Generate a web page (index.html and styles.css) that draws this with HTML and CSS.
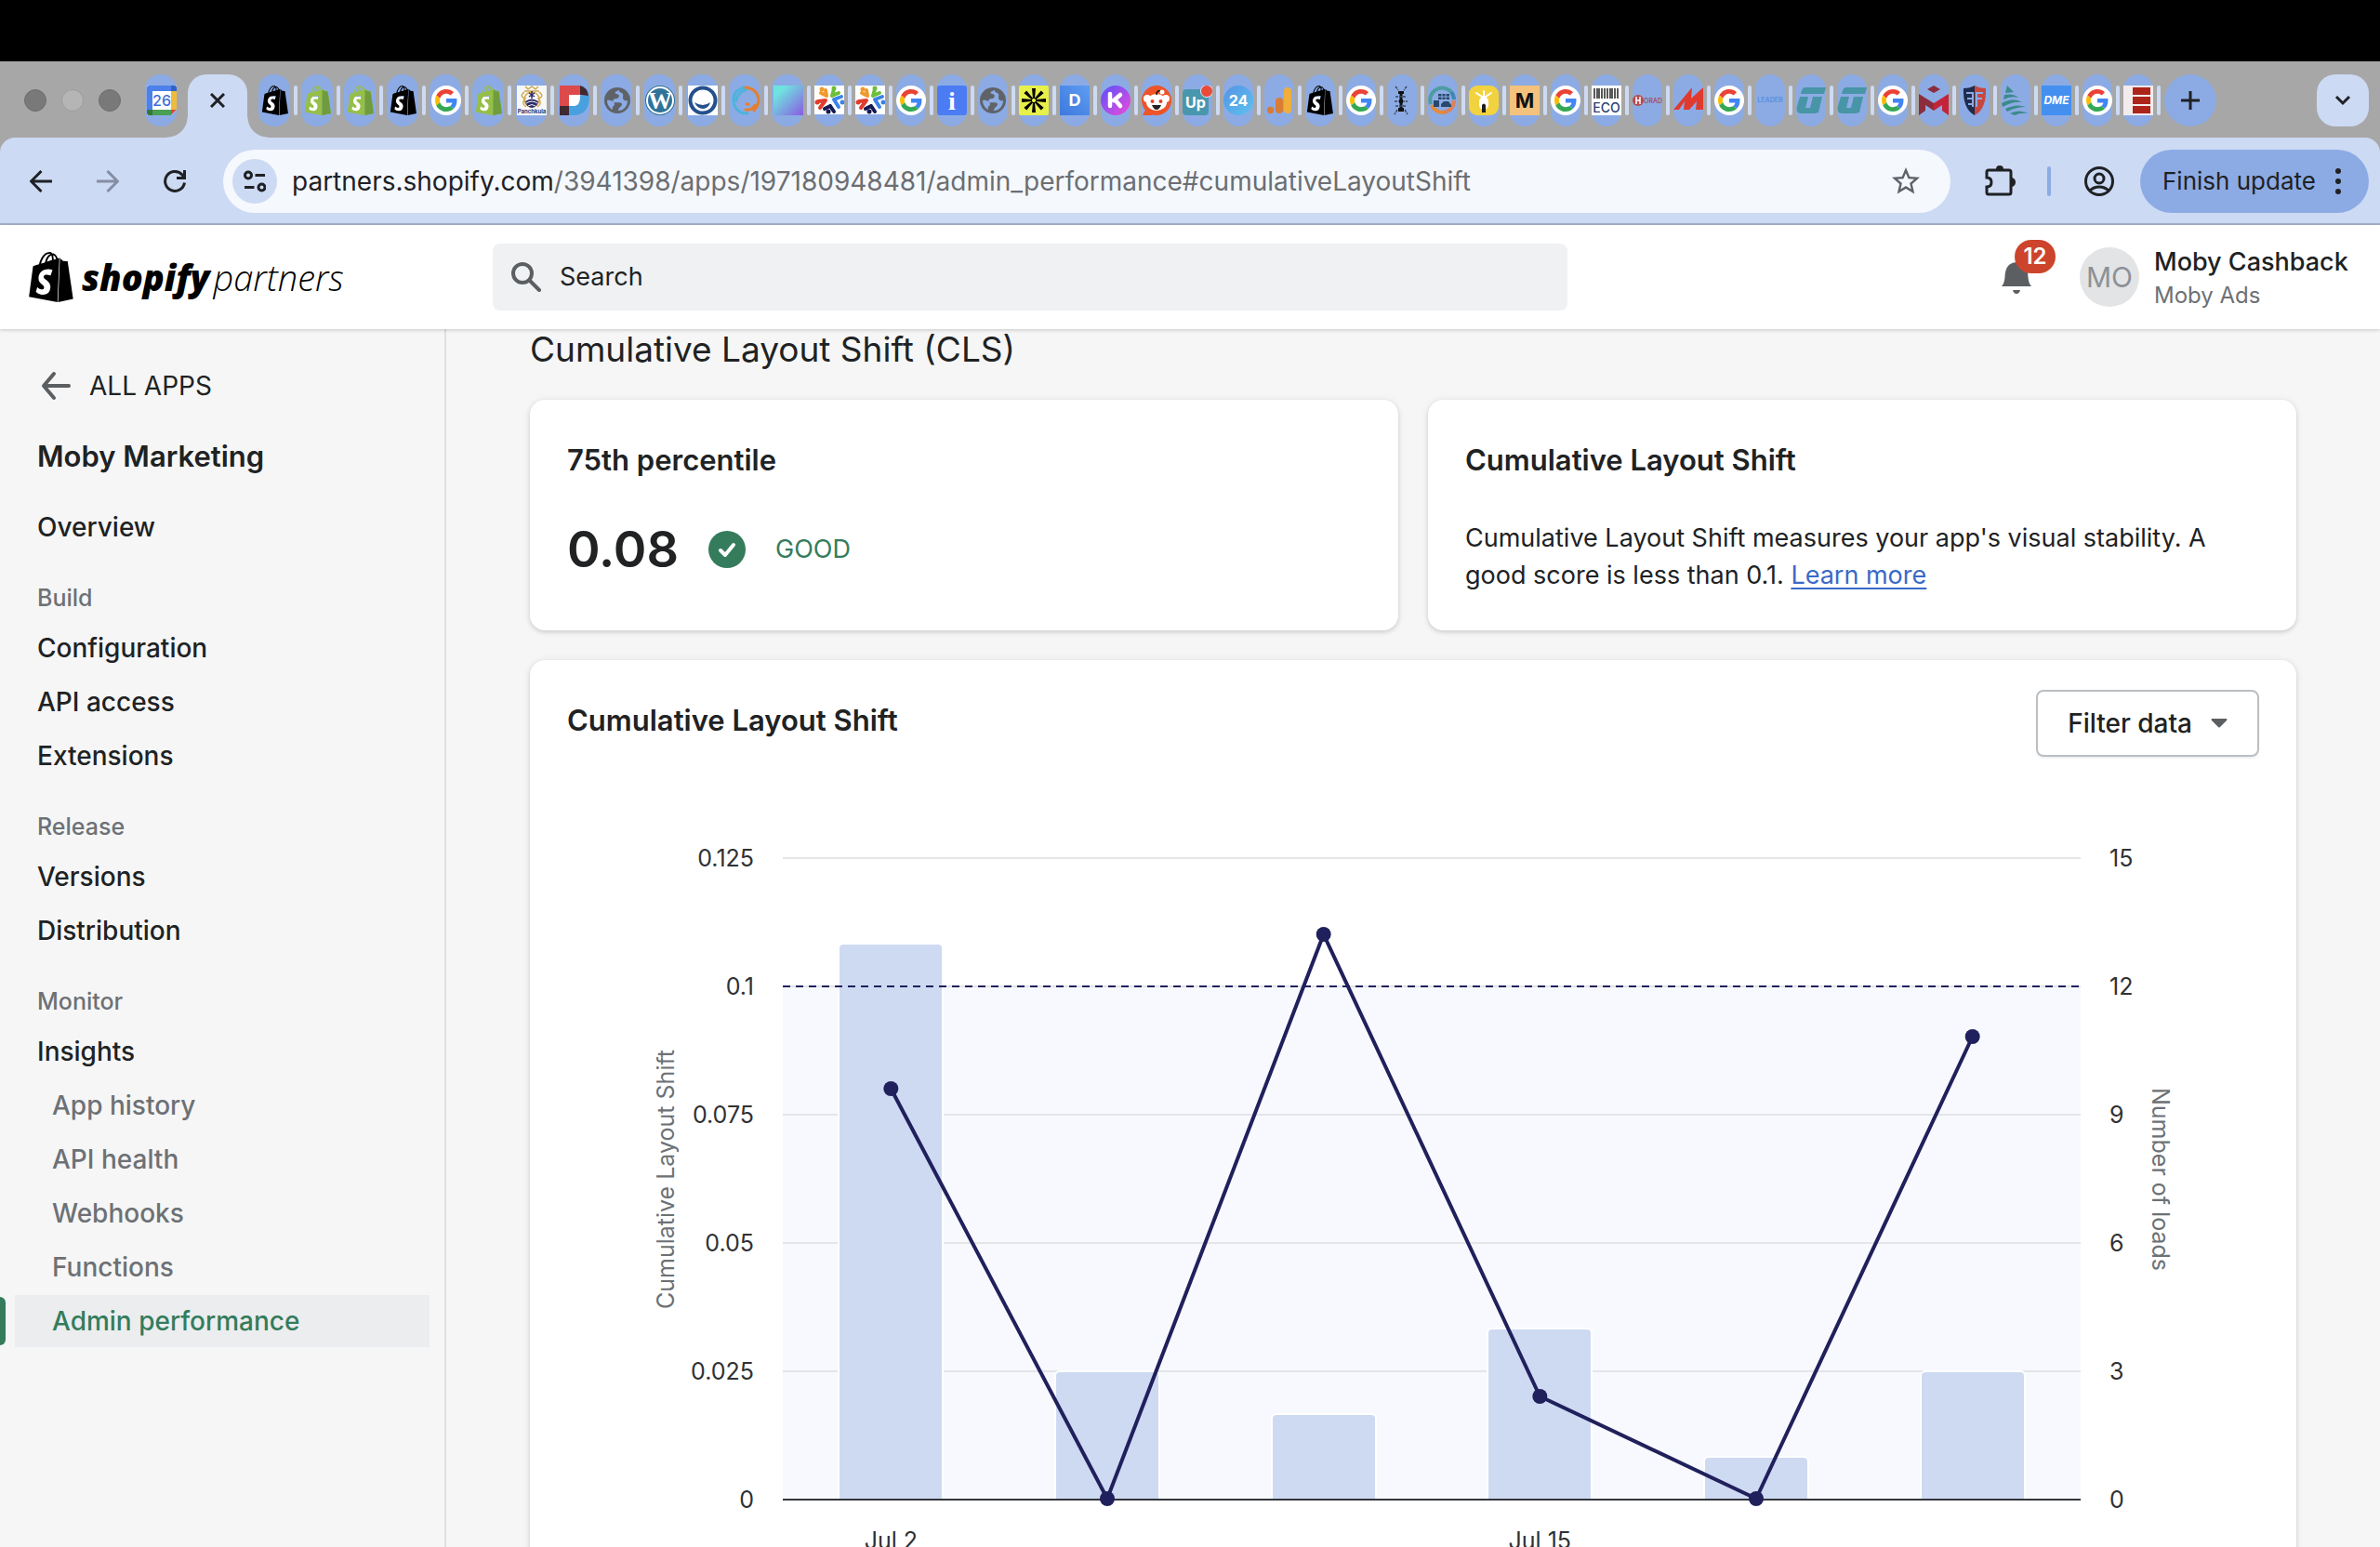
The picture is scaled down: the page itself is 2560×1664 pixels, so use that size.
FILE: index.html
```html
<!DOCTYPE html>
<html lang="en">
<head>
<meta charset="utf-8">
<title>Moby Marketing - Admin performance</title>
<link rel="stylesheet" href="styles.css">
</head>
<body>
<svg class="sprite" aria-hidden="true">
  <defs>
    <linearGradient id="grad-aqua" x1="0" y1="0" x2="1" y2="1"><stop offset="0.2" stop-color="#6fe3e0"/><stop offset="1" stop-color="#8a5be0"/></linearGradient>
    <linearGradient id="grad-blue" x1="1" y1="0" x2="0" y2="1"><stop offset="0" stop-color="#5f9cf2"/><stop offset="1" stop-color="#3c79dc"/></linearGradient>
    <linearGradient id="grad-pink" x1="0" y1="0" x2="1" y2="1"><stop offset="0.2" stop-color="#7550f5"/><stop offset="1" stop-color="#f04bd8"/></linearGradient>
    <linearGradient id="grad-sky" x1="0" y1="0" x2="1" y2="1"><stop offset="0" stop-color="#5592e6"/><stop offset="1" stop-color="#5cc3ee"/></linearGradient>
  </defs>
  <symbol id="bag" viewBox="0 0 24 24">
    <path d="M15.337 23.979l7.216-1.561s-2.604-17.613-2.625-17.73c-.018-.116-.114-.192-.211-.192s-1.929-.136-1.929-.136-1.275-1.274-1.439-1.411c-.045-.037-.075-.057-.121-.074l-.914 21.104h.023zM11.71 11.305s-.81-.424-1.774-.424c-1.447 0-1.504.906-1.504 1.141 0 1.232 3.24 1.715 3.24 4.629 0 2.295-1.44 3.76-3.406 3.76-2.354 0-3.54-1.465-3.54-1.465l.646-2.086s1.245 1.066 2.28 1.066c.675 0 .975-.545.975-.932 0-1.619-2.654-1.694-2.654-4.359-.034-2.237 1.571-4.416 4.827-4.416 1.257 0 1.875.361 1.875.361l-.945 2.715-.02.01zM11.17.83c.136 0 .271.038.405.135-.984.465-2.064 1.639-2.508 3.992-.656.213-1.293.405-1.889.578C7.697 3.75 8.951.84 11.17.84V.83zm1.235 2.949v.135c-.754.232-1.583.484-2.394.736.466-1.777 1.333-2.645 2.085-2.971.193.501.309 1.176.309 2.1zm.539-2.234c.694.074 1.141.867 1.429 1.755-.349.114-.735.231-1.158.366v-.252c0-.752-.096-1.371-.271-1.871v.002zm2.992 1.289c-.02 0-.06.021-.078.021s-.289.075-.714.21c-.423-1.233-1.176-2.37-2.508-2.37h-.115C12.135.209 11.669 0 11.265 0 8.159 0 6.675 3.877 6.21 5.846c-1.194.365-2.063.636-2.16.674-.675.213-.694.232-.772.87-.075.462-1.83 14.063-1.83 14.063L15.009 24l.927-21.166z"/>
  </symbol>
  <symbol id="shop-black" viewBox="0 0 32 32">
    <path d="M6 12h10v17H4z" fill="#fff"/><path d="M20.5 8v24" stroke="#fff"/>
    <use href="#bag" width="32" height="32" fill="#000"/>
  </symbol>
  <symbol id="shop-green" viewBox="0 0 32 32">
    <path d="M6 12h10v17H4z" fill="#fff"/>
    <use href="#bag" width="32" height="32" fill="#95bf47"/>
    <path d="M20.6 4.5l3 1.4 3 .5 3.4 23.6-9.600 2z" fill="#6f9c3c"/>
  </symbol>
  <symbol id="google" viewBox="0 0 32 32">
    <circle cx="16" cy="16" r="16" fill="#fff"/>
    <g transform="translate(4 4) scale(.5)">
      <path fill="#ea4335" d="M24 9.500c3.540 0 6.710 1.220 9.210 3.600l6.850-6.850C35.900 2.380 30.470 0 24 0 14.620 0 6.510 5.380 2.560 13.220l7.980 6.190C12.430 13.720 17.740 9.500 24 9.500z"/>
      <path fill="#4285f4" d="M46.980 24.550c0-1.570-.15-3.090-.38-4.550H24v9.020h12.940c-.58 2.960-2.260 5.480-4.780 7.180l7.730 6c4.510-4.180 7.090-10.360 7.090-17.650z"/>
      <path fill="#fbbc05" d="M10.530 28.590c-.48-1.450-.76-2.990-.76-4.590s.27-3.140.76-4.590l-7.980-6.190C.92 16.460 0 20.120 0 24c0 3.880.92 7.540 2.560 10.780l7.970-6.190z"/>
      <path fill="#34a853" d="M24 48c6.480 0 11.930-2.130 15.890-5.810l-7.730-6c-2.150 1.450-4.920 2.300-8.160 2.300-6.260 0-11.570-4.220-13.470-9.910l-7.980 6.190C6.510 42.620 14.620 48 24 48z"/>
    </g>
  </symbol>
  <symbol id="globe" viewBox="0 0 32 32">
    <circle cx="16" cy="16" r="14" fill="#5f6368"/>
    <path d="M18 5c-4 1-6 3-3 4 3 0 4 3 1 5-4 0-6 2-4 4 3 1 8-1 9 2 0 3-4 3-4 7 6 0 10-5 10-11-2 1-4 0-5-2 0-3 1-4-1-6-2-1-3-1-3-3zM5 16c4-1 8 2 8 4s-3 2-2 6c-4-2-6-6-6-10z" fill="#8cabe4"/>
  </symbol>
  <symbol id="people" viewBox="0 0 32 32">
    <path d="M0 0h32v31H0z" fill="#fff"/>
    <g stroke-width="4" stroke-linecap="round"><path d="M7 8l6 3M13 11l-1-6" stroke="#ef9a2c"/><path d="M19 11l2-7M19 11l7-3" stroke="#6cbf3a"/><path d="M21 15l8-3M21 15l5 8" stroke="#3b83e8"/><path d="M12 16l-8 1M12 16l-6 8" stroke="#e03c2e"/><path d="M17 22l-6 3M17 22l4 6" stroke="#151a52"/></g>
    <g><circle cx="8" cy="4" r="2.500" fill="#ef9a2c"/><circle cx="21" cy="3" r="2.500" fill="#6cbf3a"/><circle cx="30" cy="18" r="2.500" fill="#3b83e8"/><circle cx="3" cy="18" r="2.500" fill="#e03c2e"/><circle cx="15" cy="28" r="2.500" fill="#151a52"/></g>
  </symbol>
  <symbol id="tealq" viewBox="0 0 32 32"><path d="M9 2h23l-2 7H5q1-6 4-7z" fill="#4795a7"/><path d="M4 12h9l-3 12h5l3-12h10l-4 17-4 1H6q-7 0-5-8z" fill="#4795a7"/></symbol>
</svg>

<div class="window">
  <div class="menubar"></div>
  <nav class="tabstrip" aria-label="Tabs">
    <div class="lights"><span class="light"></span><span class="light light-pale"></span><span class="light"></span></div>
    <a class="tab wide pinned" href="#"><svg viewBox="0 0 32 32">
      <path d="M0 0h32v32H0z" fill="#fff"/><path d="M0 2q0-2 2-2h24v6H6v20H0z" fill="#4c80ea"/>
      <path d="M26 0h4q2 0 2 2v4h-6z" fill="#2f63c8"/><path d="M26 6h6v20h-6z" fill="#efbb3d"/>
      <path d="M6 26h20v6H6z" fill="#4a9f55"/><path d="M0 26h6v6H2q-2 0-2-2z" fill="#35783f"/>
      <path d="M26 26h6l-6 6z" fill="#e0483c"/><path d="M32 26v6h-6z" fill="#8cabe4"/>
      <text x="16" y="22" class="t16">26</text></svg></a>
    <div class="tab-active"><button class="tab-close" aria-label="Close tab"><svg viewBox="0 0 16 16"><path d="M1 1l14 14M15 1L1 15"/></svg></button></div>
    <ul class="tabs">
      <li><a class="tab wide" href="#"><svg><use href="#shop-black"/></svg></a></li>
      <li><a class="tab wide" href="#"><svg><use href="#shop-green"/></svg></a></li>
      <li><a class="tab wide" href="#"><svg><use href="#shop-green"/></svg></a></li>
      <li><a class="tab wide" href="#"><svg><use href="#shop-black"/></svg></a></li>
      <li><a class="tab wide" href="#"><svg><use href="#google"/></svg></a></li>
      <li><a class="tab wide" href="#"><svg><use href="#shop-green"/></svg></a></li>
      <li><a class="tab wide" href="#"><svg viewBox="0 0 32 32">
        <path d="M0 0h32v32H0z" fill="#f7f7f8"/>
        <g fill="none" stroke="#d0a94e" stroke-width="1.500"><path d="M9 1l3 3 4-3 4 3 3-3M8 6h16M8 7q-6 5 1 7-5 5 1 9M24 7q6 5-1 7 5 5-1 9"/><circle cx="16" cy="15" r="8"/></g>
        <path d="M9 17q7-5 14 0-1 6-7 7-6-1-7-7z" fill="#2b2a6b"/><path d="M10 19q6-4 12 0M12 22q4-3 8 0" stroke="#f7f7f8"/><path d="M16 6v8M13 8l6 4M19 8l-6 4" stroke="#2b2a6b" stroke-width="1.500"/>
        <text x="16" y="30" class="t6 heavy navy">Panchkula</text></svg></a></li>
      <li><a class="tab wide" href="#"><svg viewBox="0 0 32 32">
        <path d="M0 0h22v10H10v12H0z" fill="#dc4a4b"/><path d="M22 0q8 2 9 11l-9-1zM0 22h10v10H0z" fill="#3f2a30"/>
        <path d="M10 10h12v4q-1 7-5 8h-7z" fill="#fff"/><path d="M22 11h10q0 20-16 21h-6V22h6q6-1 6-8z" fill="#48a0df"/></svg></a></li>
      <li><a class="tab wide" href="#"><svg><use href="#globe"/></svg></a></li>
      <li><a class="tab wide" href="#"><svg viewBox="0 0 32 32">
        <circle cx="16" cy="16" r="16" fill="#2f7399"/><circle cx="16" cy="16" r="14" fill="none" stroke="#fff" stroke-width="2"/>
        <text x="16" y="25" class="t26 serif heavy white">W</text></svg></a></li>
      <li><a class="tab wide" href="#"><svg viewBox="0 0 32 32">
        <path d="M0 0h32v32H0z" fill="#fff"/><circle cx="16" cy="16" r="13.500" fill="none" stroke="#24508c" stroke-width="4"/>
        <path d="M7 18q9 6 17 0-2 7-8 7t-9-7z" fill="#24508c"/></svg></a></li>
      <li><a class="tab wide" href="#"><svg viewBox="0 0 32 32">
        <g fill="none" stroke-linecap="round" stroke-width="3"><path d="M14 2Q2 6 3 17q2 13 15 13M17 4Q7 8 6 16" stroke="#4fb3dc"/><path d="M16 2q14 2 14 15-1 6-5 10M17 20h2M16 26q7 1 10-5" stroke="#e57f2f"/></g></svg></a></li>
      <li><a class="tab wide" href="#"><svg viewBox="0 0 32 32"><path d="M0 0h32v32H0z" fill="url(#grad-aqua)"/></svg></a></li>
      <li><a class="tab" href="#"><svg><use href="#people"/></svg></a></li>
      <li><a class="tab" href="#"><svg><use href="#people"/></svg></a></li>
      <li><a class="tab" href="#"><svg><use href="#google"/></svg></a></li>
      <li><a class="tab" href="#"><svg viewBox="0 0 32 32"><rect width="32" height="32" rx="3" fill="#4b7cf3"/><text x="16" y="26" class="t28 serif heavy white">i</text></svg></a></li>
      <li><a class="tab" href="#"><svg><use href="#globe"/></svg></a></li>
      <li><a class="tab" href="#"><svg viewBox="0 0 32 32">
        <rect width="32" height="32" rx="2" fill="#e8f04a"/>
        <g fill="#000"><path d="M14 3h4l-1 11h-2zM14 29h4l-1-11h-2zM3 14v4l11-1v-2zM29 14v4l-11-1v-2z"/><path d="M14 3h4l-1 11h-2zM14 29h4l-1-11h-2zM3 14v4l11-1v-2zM29 14v4l-11-1v-2z" transform="rotate(45 16 16)"/></g></svg></a></li>
      <li><a class="tab" href="#"><svg viewBox="0 0 32 32"><path d="M0 0h32v32H0z" fill="url(#grad-blue)"/><text x="16" y="22" class="t18 heavy white">D</text></svg></a></li>
      <li><a class="tab" href="#"><svg viewBox="0 0 32 32"><circle cx="16" cy="16" r="16" fill="url(#grad-pink)"/><path d="M10 9v13M21 10l-7 6M16 16l5 6" stroke="#fff" stroke-width="4.500" stroke-linecap="round"/></svg></a></li>
      <li><a class="tab" href="#"><svg viewBox="0 0 32 32">
        <circle cx="16" cy="16" r="16" fill="#ee5427"/><path d="M1 32l4-8 7 8z" fill="#ee5427"/>
        <circle cx="6" cy="14" r="4" fill="#fff"/><circle cx="26" cy="14" r="4" fill="#fff"/><ellipse cx="16" cy="18" rx="11" ry="9" fill="#fff"/>
        <path d="M16 10q0-5 4-4" fill="none" stroke="#111" stroke-width="1.500"/><circle cx="22" cy="7" r="2.500" fill="#fff"/>
        <circle cx="11.500" cy="17" r="2" fill="#e0402c"/><circle cx="20.500" cy="17" r="2" fill="#e0402c"/><path d="M11 21h10q-2 5-5 5t-5-5z" fill="#222"/></svg></a></li>
      <li><a class="tab" href="#"><svg viewBox="0 0 32 32"><rect y="4" width="28" height="28" rx="4" fill="#4897ae"/><text x="14" y="24" class="t16 heavy white">Up</text><circle cx="26" cy="6" r="6.500" fill="#e94a3a" stroke="#dfe8f8"/></svg></a></li>
      <li><a class="tab" href="#"><svg viewBox="0 0 32 32"><circle cx="16" cy="16" r="16" fill="url(#grad-sky)"/><text x="16" y="22" class="t16 heavy white">24</text></svg></a></li>
      <li><a class="tab" href="#"><svg viewBox="0 0 32 32"><rect x="21" y="2" width="8" height="28" rx="4" fill="#efae3d"/><rect x="12" y="13" width="8" height="17" rx="4" fill="#d97c35"/><circle cx="6.500" cy="26.500" r="3.700" fill="#d97c35"/></svg></a></li>
      <li><a class="tab" href="#"><svg><use href="#shop-black"/></svg></a></li>
      <li><a class="tab" href="#"><svg><use href="#google"/></svg></a></li>
      <li><a class="tab" href="#"><svg viewBox="0 0 32 32"><path d="M15 6v22" stroke="#111" stroke-width="3"/><path d="M9 1l3 4M21 1l-3 4M9 12h12M8 17h14M9 22h12M11 26l-3 5M19 26l3 5" stroke="#3a465c" stroke-width="1.500" stroke-dasharray="3 1"/><path d="M12 6h6v3h-6zM12 24h6v4h-6zM13 15h4v4h-4z" fill="#111"/></svg></a></li>
      <li><a class="tab" href="#"><svg viewBox="0 0 32 32">
        <g fill="none" stroke-width="4"><path d="M3 20A13 13 0 0 1 25 7" stroke="#4c9da3"/><path d="M25 7a13 13 0 0 1 3 8" stroke="#3d86b5"/><path d="M28 16a13 13 0 0 1-12 13" stroke="#dc8256"/><path d="M16 29A13 13 0 0 1 4 21" stroke="#e58b3c"/></g>
        <path d="M11 9h12v6H11zM6 16h6v7H6zM14 20l3-3h5l3 4v2H14z" fill="#29486c"/><path d="M11 12h12M15 9v6M19 9v6" stroke="#8cabe4"/></svg></a></li>
      <li><a class="tab" href="#"><svg viewBox="0 0 32 32"><rect width="32" height="32" rx="9" fill="#f2d33f"/><path d="M8 8l6 4h4l6-4M16 6v6" stroke="#fff" stroke-width="2" stroke-linecap="round"/><rect x="11" y="12" width="10" height="14" rx="5" fill="#fff"/><path d="M14 21q2-3 4 0v8h-4z" fill="#1d1d1d"/></svg></a></li>
      <li><a class="tab" href="#"><svg viewBox="0 0 32 32"><path d="M0 0h32v32H0z" fill="#f3c27c"/><text x="16" y="24" class="t22 heavy">M</text></svg></a></li>
      <li><a class="tab" href="#"><svg><use href="#google"/></svg></a></li>
      <li><a class="tab" href="#"><svg viewBox="0 0 32 32"><path d="M0 0h32v32H0z" fill="#fff"/><path d="M3 3v11M6 3v11M8 3v11M11 3v11M14 3v11M17 3v11M20 3v11M22 3v11M25 3v11M28 3v11" stroke="#222" stroke-width="1.500"/><text x="16" y="29" class="t14 navy">ECO</text></svg></a></li>
      <li><a class="tab" href="#"><svg viewBox="0 0 32 32"><circle cx="6" cy="16" r="6" fill="#b54a50"/><path d="M4 12v8M8 12v8M4 16h4" stroke="#fff" stroke-width="1.500"/><text x="22" y="19" class="t7 wine">ORAD</text></svg></a></li>
      <li><a class="tab" href="#"><svg viewBox="0 0 32 32"><path d="M0 26L20 2l-1 12L32 2v24h-8l1-9-8 9h-6l1-9-6 9z" fill="#e03a2f"/></svg></a></li>
      <li><a class="tab" href="#"><svg><use href="#google"/></svg></a></li>
      <li><a class="tab" href="#"><svg viewBox="0 0 32 32"><text x="16" y="18" class="t7 heavy sky">LEADER</text></svg></a></li>
      <li><a class="tab" href="#"><svg><use href="#tealq"/></svg></a></li>
      <li><a class="tab" href="#"><svg><use href="#tealq"/></svg></a></li>
      <li><a class="tab" href="#"><svg><use href="#google"/></svg></a></li>
      <li><a class="tab" href="#"><svg viewBox="0 0 32 32"><path d="M16 0l7 4-7 4-7-4z" fill="#8b2d3c"/><path d="M0 9l16 10v8l-9-6v6l-7 5z" fill="#8b2d3c"/><path d="M32 9L16 19v8l9-6v6l7 5z" fill="#c42439"/></svg></a></li>
      <li><a class="tab" href="#"><svg viewBox="0 0 32 32"><path d="M4 3q7 0 12-3v32Q3 25 4 3z" fill="#1e2d4d"/><path d="M28 3q-7 0-12-3v32q13-7 12-29z" fill="#c8473e"/><path d="M7 8h7v15M8 14h6M9 20h5M25 8h-7v15M24 14h-6" fill="none" stroke="#8cabe4" stroke-width="2"/></svg></a></li>
      <li><a class="tab" href="#"><svg viewBox="0 0 32 32"><path d="M7 0l7 7-9 1zM4 10q10-2 15 3-8-2-16 2zM1 19q13-7 22-1-10-1-21 5zM5 25q12-6 22-2-10 0-20 5zM10 30q9-5 20 0-9-1-15 2z" fill="#3c8a8b"/></svg></a></li>
      <li><a class="tab" href="#"><svg viewBox="0 0 32 32"><path d="M0 0h32v32H0z" fill="#4390f0"/><text x="16" y="20" class="t12 heavy ital white">DME</text></svg></a></li>
      <li><a class="tab" href="#"><svg><use href="#google"/></svg></a></li>
      <li><a class="tab" href="#"><svg viewBox="0 0 32 32"><path d="M0 0h32v32H0z" fill="#f3ecec"/><path d="M10 2h19v8H10zM10 12h19v8H10zM10 22h19v8H10z" fill="#ad2419"/></svg></a></li>
    </ul>
    <button class="tab-new" aria-label="New tab"><svg viewBox="0 0 20 20"><path d="M10 0v20M0 10h20"/></svg></button>
    <button class="tab-search" aria-label="Search tabs"><svg viewBox="0 0 18 18"><path d="M2 5l7 7 7-7"/></svg></button>
  </nav>

  <div class="toolbar-wrap">
  <div class="toolbar">
    <button class="tool" aria-label="Back"><svg viewBox="0 0 24 24"><path d="M24 12H2M12.500 1L1.500 12l11 11"/></svg></button>
    <button class="tool tool-off" aria-label="Forward"><svg viewBox="0 0 24 24"><path d="M0 12h22M11.500 1l11 11-11 11"/></svg></button>
    <button class="tool" aria-label="Reload"><svg viewBox="0 0 24 24"><path d="M22.500 13.500A10.500 10.500 0 1 1 20 5l2 2.500M22.500 0v8.500H14"/></svg></button>
    <div class="omnibox">
      <button class="site-info" aria-label="Site information"><svg viewBox="0 0 24 24"><circle cx="5" cy="5.500" r="3.500"/><path d="M12.500 5.500H23M1 18.500h10.500"/><circle cx="19.500" cy="18.500" r="3.500"/></svg></button>
      <div class="url" role="textbox" contenteditable="true" spellcheck="false" aria-label="Address">partners.shopify.com<span class="url-path">/3941398/apps/197180948481/admin_performance#cumulativeLayoutShift</span></div>
      <button class="star" aria-label="Bookmark"><svg viewBox="0 0 24 24"><path d="M22 9.240l-7.190-.62L12 2 9.190 8.630 2 9.240l5.460 4.730L5.820 21 12 17.270 18.180 21l-1.630-7.030L22 9.240zM12 15.400l-3.760 2.270 1-4.280-3.320-2.880 4.380-.38L12 6.100l1.710 4.040 4.380.38-3.320 2.880 1 4.280L12 15.400z"/></svg></button>
    </div>
    <button class="puzzle" aria-label="Extensions"><svg viewBox="0 0 36 36"><path class="line" d="M4 8q0-2 2-2h22q2 0 2 2v22q0 2-2 2H6q-2 0-2-2v-6q5 0 5-5t-5-5z"/><path class="solid" d="M14 5q0-4 4-4t4 4zM31 14q4 1 4 5t-4 5z"/></svg></button>
    <span class="tool-divider"></span>
    <button class="profile" aria-label="Profile"><svg viewBox="0 0 32 32"><circle cx="16" cy="16" r="14.500"/><circle cx="16" cy="13" r="5"/><path d="M6 26q4-4 10-4t10 4"/></svg></button>
    <button class="finish">Finish update<svg viewBox="0 0 6 28"><circle cx="3" cy="3" r="3"/><circle cx="3" cy="14" r="3"/><circle cx="3" cy="25" r="3"/></svg></button>
  </div>
  </div>

  <header class="topbar">
    <a class="brand" href="#"><svg class="brand-bag"><use href="#bag" width="54" height="54"/></svg><span class="brand-name">shopify</span><span class="brand-sub">partners</span></a>
    <label class="search">
      <svg viewBox="0 0 32 32"><circle cx="12" cy="12" r="10"/><path d="M19.500 19.500L30 30"/></svg>
      <input type="text" placeholder="Search" aria-label="Search">
    </label>
    <div class="account">
      <button class="bell" aria-label="Notifications"><svg viewBox="0 0 32 36"><path d="M0 28q3-3 3.500-10C4 8 7 3 16 2c9 1 12 6 12.500 16q.5 7 3.500 10zM12 32h8q-1 4-4 4t-4-4z"/></svg><span class="badge">12</span></button>
      <span class="avatar">MO</span>
      <div class="who"><span class="who-name">Moby Cashback</span><span class="who-org">Moby Ads</span></div>
    </div>
  </header>

  <div class="page">
    <aside class="sidebar">
      <a class="back" href="#"><svg viewBox="0 0 32 32"><path d="M30 16H4M14 3L3 16l11 13"/></svg>ALL APPS</a>
      <h2 class="app-name">Moby Marketing</h2>
      <ul class="nav"><li><a href="#">Overview</a></li></ul>
      <h3 class="nav-title">Build</h3>
      <ul class="nav"><li><a href="#">Configuration</a></li><li><a href="#">API access</a></li><li><a href="#">Extensions</a></li></ul>
      <h3 class="nav-title">Release</h3>
      <ul class="nav"><li><a href="#">Versions</a></li><li><a href="#">Distribution</a></li></ul>
      <h3 class="nav-title">Monitor</h3>
      <ul class="nav">
        <li><a href="#">Insights</a></li>
        <li class="sub"><a href="#">App history</a></li>
        <li class="sub"><a href="#">API health</a></li>
        <li class="sub"><a href="#">Webhooks</a></li>
        <li class="sub"><a href="#">Functions</a></li>
        <li class="sub current"><a href="#">Admin performance</a></li>
      </ul>
    </aside>

    <main class="content">
      <h1 class="title">Cumulative Layout Shift (CLS)</h1>
      <div class="cards">
        <section class="card">
          <h2 class="card-title">75th percentile</h2>
          <div class="score"><span class="score-value">0.08</span><svg viewBox="0 0 40 40"><circle cx="20" cy="20" r="20"/><path d="M13 21l5 5 9-11"/></svg><span class="score-label">GOOD</span></div>
        </section>
        <section class="card">
          <h2 class="card-title">Cumulative Layout Shift</h2>
          <p class="card-text">Cumulative Layout Shift measures your app's visual stability. A good score is less than 0.1. <a href="#">Learn more</a></p>
        </section>
      </div>
      <section class="card card-chart">
        <div class="chart-head">
          <h2 class="card-title">Cumulative Layout Shift</h2>
          <button class="filter">Filter data<svg viewBox="0 0 18 10"><path d="M1 0h16q1 1 0 2l-7 7q-1 1-2 0L1 2q-1-1 0-2z"/></svg></button>
        </div>
        <div class="chart">
          <span class="axis-title axis-left">Cumulative Layout Shift</span>
          <ol class="ticks ticks-left"><li>0.125</li><li>0.1</li><li>0.075</li><li>0.05</li><li>0.025</li><li>0</li></ol>
          <div class="plot">
            <svg class="plot-back" width="100%" height="690">
              <rect class="zone" x="0" y="138" width="100%" height="552"/>
              <g class="grid"><line x1="0" y1="0" x2="100%" y2="0"/><line x1="0" y1="138" x2="100%" y2="138"/><line x1="0" y1="276" x2="100%" y2="276"/><line x1="0" y1="414" x2="100%" y2="414"/><line x1="0" y1="552" x2="100%" y2="552"/></g>
            </svg>
            <div class="bars"><i style="height:597px"></i><i style="height:137px"></i><i style="height:91px"></i><i style="height:183px"></i><i style="height:45px"></i><i style="height:137px"></i></div>
            <svg class="plot-front" width="100%" height="690">
              <line class="target" x1="0" y1="138" x2="100%" y2="138"/>
              <line class="base" x1="0" y1="690" x2="100%" y2="690"/>
              <g class="series"><line x1="8.333%" y1="248" x2="25%" y2="689"/><line x1="25%" y1="689" x2="41.667%" y2="82"/><line x1="41.667%" y1="82" x2="58.333%" y2="579"/><line x1="58.333%" y1="579" x2="75%" y2="689"/><line x1="75%" y1="689" x2="91.667%" y2="192"/></g>
              <g class="dots"><circle cx="8.333%" cy="248" r="8"/><circle cx="25%" cy="689" r="8"/><circle cx="41.667%" cy="82" r="8"/><circle cx="58.333%" cy="579" r="8"/><circle cx="75%" cy="689" r="8"/><circle cx="91.667%" cy="192" r="8"/></g>
            </svg>
          </div>
          <ol class="ticks ticks-right"><li>15</li><li>12</li><li>9</li><li>6</li><li>3</li><li>0</li></ol>
          <span class="axis-title">Number of loads</span>
          <div class="dates"><span>Jul 2</span><span></span><span></span><span>Jul 15</span><span></span><span></span></div>
        </div>
      </section>
    </main>
  </div>
</div>
</body>
</html>
```
FILE: styles.css
```css
* { box-sizing: border-box; }

body {
  margin: 0;
  font-family: Inter, "Liberation Sans", sans-serif;
  font-size: 27px;
  line-height: 40px;
  color: #202223;
  background: #f6f6f6;
}

button { margin: 0; padding: 0; border: 0; background: none; font: inherit; color: inherit; }
a { color: inherit; text-decoration: none; }
ul, ol { margin: 0; padding: 0; list-style: none; }
h1, h2, h3, p { margin: 0; font-size: inherit; font-weight: 400; }
svg { display: block; fill: none; }

.sprite { position: absolute; width: 0; height: 0; }

.window { display: flex; flex-direction: column; height: 100vh; overflow: hidden; }
.menubar { flex: none; height: 66px; background: #000; }

/* Tab strip */
.tabstrip { flex: none; display: flex; align-items: center; height: 82px; padding: 2px 12px 0 26px; background: #a7a7a7; }
.tabstrip svg { flex: none; }
.lights { display: flex; gap: 16px; margin-right: 26px; }
.light { width: 24px; height: 24px; border-radius: 50%; background: #797979; border: 1px solid #6e6e6e; }
.light-pale { background: #b5b5b5; border-color: #9c9c9c; }
.tab { display: flex; align-items: center; justify-content: flex-end; width: 32px; height: 56px; border-radius: 16px; background: #8cabe4; }
.tab.wide { width: 34px; }
.tab svg { width: 32px; height: 32px; }
.tab text { font-family: Inter, sans-serif; font-weight: 500; text-anchor: middle; fill: #111; }
.tab .heavy { font-weight: 700; }
.tab .serif { font-family: "Liberation Serif", serif; }
.tab .ital { font-style: italic; }
.tab .t6 { font-size: 6px; }
.tab .t7 { font-size: 7px; }
.tab .t12 { font-size: 12px; }
.tab .t14 { font-size: 14px; }
.tab .t16 { font-size: 16px; }
.tab .t18 { font-size: 18px; }
.tab .t22 { font-size: 22px; }
.tab .t26 { font-size: 26px; }
.tab .t28 { font-size: 28px; }
.tab .white { fill: #fff; }
.tab .navy { fill: #2c4074; }
.tab .wine { fill: #a54356; }
.tab .sky { fill: #5b93dd; }
.tab.pinned text { fill: #3f6fd8; }
.tabs { display: flex; }
.tabs li { display: flex; align-items: center; }
.tabs li::after { content: ""; width: 4px; height: 32px; margin: 0 4px; border-radius: 2px; background: #cddaf4; }
.tab-active { position: relative; align-self: flex-end; display: flex; justify-content: center; width: 64px; height: 68px; margin: 0 12px; padding-top: 20px; border-radius: 20px 20px 0 0; background: #cddaf4; }
.tab-active::before, .tab-active::after { content: ""; position: absolute; bottom: 0; width: 22px; height: 22px; }
.tab-active::before { right: 100%; background: radial-gradient(circle at 0 0, transparent 21px, #cddaf4 22px); }
.tab-active::after { left: 100%; background: radial-gradient(circle at 100% 0, transparent 21px, #cddaf4 22px); }
.tab.pinned { position: relative; z-index: 1; }
.tab-close { height: 16px; }
.tab-close svg { width: 16px; height: 16px; stroke: #1f2124; stroke-width: 3; }
.tab-new { display: grid; place-items: center; width: 56px; height: 56px; border-radius: 50%; background: #8cabe4; }
.tab-new svg { width: 20px; height: 20px; stroke: #1f2124; stroke-width: 3; }
.tab-search { display: grid; place-items: center; width: 56px; height: 56px; margin-left: auto; border-radius: 20px; background: #cddaf4; }
.tab-search svg { width: 18px; height: 18px; stroke: #1f2124; stroke-width: 3; }

/* Toolbar */
.toolbar-wrap { flex: none; background: #a7a7a7; }
.toolbar { display: flex; align-items: center; height: 94px; padding: 0 12px 0 20px; border-radius: 16px 16px 0 0; background: #cddaf4; box-shadow: inset 0 -2px 0 #a5b1c9; }
.tool { display: grid; place-items: center; width: 48px; height: 48px; margin-right: 24px; stroke: #1f2124; stroke-width: 3; }
.tool svg { width: 24px; height: 24px; }
.tool-off { stroke: #858da3; }
.omnibox { flex: 1; display: flex; align-items: center; height: 68px; margin-left: 4px; padding: 0 30px 0 10px; border-radius: 34px; background: #f5f8fd; }
.site-info { display: grid; place-items: center; width: 48px; height: 48px; border-radius: 50%; background: #cddaf4; stroke: #1f2124; stroke-width: 3; }
.site-info svg { width: 24px; height: 24px; }
.url { flex: 1; margin-left: 16px; font-size: 28px; white-space: nowrap; color: #1f2124; outline: 0; }
.url-path { color: #6b6e72; }
.star svg { width: 36px; height: 36px; fill: #5f6368; }
.puzzle { margin-left: 35px; }
.puzzle svg { width: 36px; height: 36px; }
.puzzle .line { stroke: #1f2124; stroke-width: 3; }
.puzzle .solid { fill: #1f2124; }
.tool-divider { width: 4px; height: 32px; margin: 0 36px 0 33px; border-radius: 2px; background: #8cabe4; }
.profile svg { width: 32px; height: 32px; stroke: #1f2124; stroke-width: 3; }
.finish { display: flex; align-items: center; justify-content: space-between; width: 246px; height: 68px; margin-left: 28px; padding: 0 30px 0 24px; border-radius: 34px; background: #8cabe4; font-size: 26px; white-space: nowrap; color: #1f2124; }
.finish svg { width: 6px; height: 28px; fill: #1f2124; }

/* Shopify top bar */
.topbar { flex: none; z-index: 1; display: flex; align-items: center; height: 112px; padding: 0 32px; background: #fff; box-shadow: 0 1px 4px rgba(0, 0, 0, 0.2); }
.brand { display: flex; align-items: center; width: 498px; font-family: "Open Sans", sans-serif; font-style: italic; font-size: 38px; line-height: 54px; color: #000; }
.brand-bag { width: 54px; height: 54px; margin: 0 6px 0 -4px; fill: #000; }
.brand-name { font-weight: 800; }
.brand-sub { margin-left: 4px; font-weight: 300; }
.search { display: flex; align-items: center; width: 1156px; height: 72px; padding: 0 20px; gap: 20px; border-radius: 8px; background: #f0f1f3; }
.search svg { width: 32px; height: 32px; stroke: #5c5f62; stroke-width: 4; stroke-linecap: round; }
.search input { flex: 1; padding: 0; border: 0; outline: 0; background: none; font: inherit; color: #202223; }
.search input::placeholder { color: #202223; opacity: 1; }
.account { display: flex; align-items: center; margin-left: auto; }
.bell { position: relative; margin-right: 52px; }
.bell svg { width: 32px; height: 36px; fill: #5c5f62; }
.badge { position: absolute; left: 14px; top: -22px; width: 44px; height: 36px; border-radius: 18px; background: #cc442b; color: #fff; font-size: 24px; line-height: 36px; font-weight: 600; text-align: center; }
.avatar { width: 64px; height: 64px; margin-right: 16px; border-radius: 50%; background: #e3e4e6; color: #8c9196; font-size: 30px; line-height: 64px; text-align: center; }
.who { display: flex; flex-direction: column; min-width: 211px; padding-top: 4px; }
.who-name { line-height: 36px; font-weight: 500; }
.who-org { font-size: 24px; line-height: 36px; color: #6d7175; }

/* Sidebar */
.page { flex: 1; display: flex; min-height: 0; }
.sidebar { flex: none; width: 480px; padding: 41px 16px 0; border-right: 2px solid #dedfe0; font-size: 28px; }
.back { display: flex; align-items: center; gap: 20px; padding-left: 28px; }
.back svg { width: 32px; height: 32px; stroke: #5c5f62; stroke-width: 4; stroke-linecap: round; stroke-linejoin: round; }
.app-name { margin: 36px 0 28px; padding-left: 24px; font-size: 31px; font-weight: 600; }
.nav { display: flex; flex-direction: column; gap: 2px; }
.nav a { display: block; padding-left: 24px; line-height: 56px; font-weight: 500; }
.nav .sub a { padding-left: 40px; color: #6d7175; }
.nav .current { position: relative; background: #ebedef; }
.nav .current a { color: #347c5c; }
.nav .current::before { content: ""; position: absolute; left: -16px; top: 2px; bottom: 2px; width: 6px; border-radius: 0 6px 6px 0; background: #347c5c; }
.nav-title { margin: 32px 0 10px; padding-left: 24px; font-size: 25px; line-height: 32px; font-weight: 500; color: #6d7175; }

/* Main column */
.content { flex: 1; min-width: 0; padding: 2px 90px 0; }
.title { margin-bottom: 34px; font-size: 37px; }
.cards { display: grid; grid-template-columns: 1fr 1fr; gap: 32px; margin-bottom: 32px; }
.card { padding: 45px 40px 39px; border-radius: 16px; background: #fff; box-shadow: 0 0 10px rgba(23, 24, 24, 0.06), 0 2px 5px rgba(0, 0, 0, 0.14); }
.card-title { font-size: 31px; font-weight: 600; }
.card-text { margin-top: 44px; }
.card-text a { color: #3a69c7; text-decoration: underline; text-decoration-thickness: 2px; text-underline-offset: 4px; }
.score { display: flex; align-items: center; margin-top: 44px; line-height: 64px; }
.score-value { font-size: 54px; font-weight: 600; }
.score svg { width: 40px; height: 40px; margin: 0 32px; }
.score circle { fill: #347c5c; }
.score path { stroke: #fff; stroke-width: 4; stroke-linecap: round; stroke-linejoin: round; }
.score-label { color: #347c5c; }

.card-chart { padding-top: 32px; }
.chart-head { display: flex; justify-content: space-between; }
.chart-head .card-title { line-height: 66px; }
.filter { display: flex; align-items: center; gap: 20px; height: 72px; padding: 0 32px; border: 2px solid #babfc3; border-radius: 8px; box-shadow: 0 2px 2px rgba(0, 0, 0, 0.06); font-size: 28px; font-weight: 500; }
.filter svg { width: 18px; height: 10px; fill: #5c5f62; }

/* Chart: axis title, ticks, plot, ticks, axis title */
.chart { display: grid; grid-template-columns: 30px 80px 1fr 40px 30px; margin-top: 97px; padding: 0 91px; font-size: 25px; line-height: 24px; }
.axis-title { writing-mode: vertical-rl; line-height: 30px; text-align: center; color: #6d7175; }
.axis-left { transform: rotate(180deg); }
.ticks { display: flex; flex-direction: column; justify-content: space-between; color: #303133; }
.ticks-left { text-align: right; }
.plot { position: relative; height: 690px; margin: 12px 31px; }
.plot svg { position: absolute; inset: 0; overflow: visible; }
.zone { fill: #f8f9fe; }
.grid line { stroke: #e4e5e7; stroke-width: 2; }
.bars { position: relative; display: grid; grid-template-columns: repeat(6, 1fr); align-items: end; justify-items: center; height: 100%; }
.bars i { width: 110px; border-radius: 4px 4px 0 0; background: #cddaf2; box-shadow: 0 0 0 2px #fff; }
.target { stroke: #20205c; stroke-width: 2; stroke-dasharray: 8 6; }
.base { stroke: #33363b; stroke-width: 2; }
.series line { stroke: #20205c; stroke-width: 4; stroke-linecap: round; }
.dots circle { fill: #20205c; }
.dates { grid-column: 3; display: grid; grid-template-columns: repeat(6, 1fr); margin: 20px 31px 0; text-align: center; color: #303133; }
```
